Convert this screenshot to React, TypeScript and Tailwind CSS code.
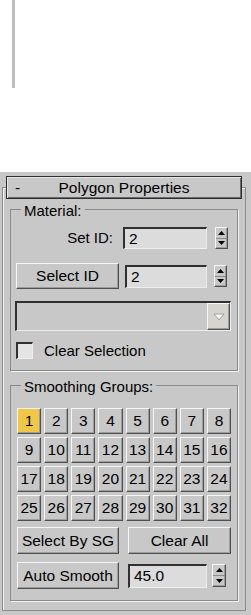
const raised =
  "border border-t-[#f6f6f6] border-l-[#f6f6f6] border-r-[#505050] border-b-[#505050] shadow-[inset_-1px_-1px_0_#9c9c9c]";
const sunken =
  "border-t-2 border-l-2 border-t-[#303030] border-l-[#303030] border-r border-b border-r-[#eeeeee] border-b-[#eeeeee]";

function Spinner({ w = 13, h = 22 }: { w?: number; h?: number }) {
  return (
    <div
      className={`flex flex-col bg-[#c8c8c8] ${raised}`}
      style={{ width: w, height: h }}
    >
      <div className="flex-1 flex items-center justify-center border-b border-[#8a8a8a]">
        <svg width="7" height="4" viewBox="0 0 7 4">
          <path d="M3.5 0 L7 4 L0 4 Z" fill="#000" />
        </svg>
      </div>
      <div className="flex-1 flex items-center justify-center">
        <svg width="7" height="4" viewBox="0 0 7 4">
          <path d="M0 0 L7 0 L3.5 4 Z" fill="#000" />
        </svg>
      </div>
    </div>
  );
}

function Btn({
  children,
  className = "",
}: {
  children: React.ReactNode;
  className?: string;
}) {
  return (
    <button
      className={`flex items-center justify-center bg-[#c8c8c8] text-[15.5px] leading-none text-black ${raised} ${className}`}
    >
      {children}
    </button>
  );
}

function Field({ value, className = "" }: { value: string; className?: string }) {
  return (
    <div
      className={`flex items-center pl-[4px] bg-[#dcdcdc] text-[15.5px] leading-none text-black ${sunken} ${className}`}
    >
      {value}
    </div>
  );
}

export default function App() {
  const groups = Array.from({ length: 32 }, (_, i) => i + 1);

  return (
    <div className="w-[251px] h-[615px] bg-white flex flex-col font-['Liberation_Sans',Arial,sans-serif] text-black overflow-hidden">
      {/* leftover of the panel above */}
      <div className="h-[172px] pl-[12px]">
        <div className="w-[3px] h-[88px] bg-[#bdbdbd]" />
      </div>

      <div className="flex-1 bg-[#c8c8c8] pt-[15px]">
        {/* rollout frame */}
        <div className="ml-[2px] w-[244px] border border-[#8a8a8a] shadow-[inset_1px_1px_0_#f2f2f2] pb-[9px]">
          {/* rollout title */}
          <div className="-mt-[12px] ml-[3px] w-[236px] h-[23px] flex items-center bg-[#c8c8c8] border border-[#2e2e2e] shadow-[inset_1px_1px_0_#e8e8e8,inset_-1px_-1px_0_#6a6a6a] text-[15.5px] leading-none">
            <span className="w-[22px] pl-[8px]">-</span>
            <span className="flex-1 text-center">Polygon Properties</span>
            <span className="w-[22px]" />
          </div>

          {/* Material */}
          <fieldset className="mx-[7px] border border-[#8a8a8a] shadow-[1px_1px_0_#f2f2f2]">
            <legend className="ml-[10px] px-[3px] pt-[3px] leading-[17px] text-[15px] bg-[#c8c8c8]">
              Material:
            </legend>
            <div className="pl-[5px] pt-[8px] pb-[11px]">
              <div className="flex items-center h-[22px]">
                <span className="w-[97px] text-right text-[15px]">Set ID:</span>
                <Field value="2" className="ml-[10px] w-[84px] h-[22px]" />
                <div className="ml-[8px]">
                  <Spinner />
                </div>
              </div>

              <div className="mt-[14px] flex items-center h-[26px]">
                <Btn className="w-[103px] h-[26px]">Select ID</Btn>
                <Field value="2" className="ml-[6px] w-[82px] h-[23px]" />
                <div className="ml-[7px]">
                  <Spinner />
                </div>
              </div>

              <div
                className={`mt-[12px] -ml-[1px] w-[216px] h-[30px] flex justify-end bg-[#c8c8c8] ${sunken}`}
              >
                <div
                  className={`w-[23px] h-full flex items-center justify-center bg-[#d6d4ce] ${raised}`}
                >
                  <svg width="12" height="8" viewBox="0 0 12 8">
                    <path
                      d="M1 1 L11 1 L6 7 Z"
                      fill="#fafafa"
                      stroke="#a0a0a0"
                      strokeWidth="1"
                    />
                  </svg>
                </div>
              </div>

              <label className="mt-[11px] flex items-center h-[17px]">
                <span
                  className={`w-[17px] h-[17px] bg-[#e4e4e4] ${sunken}`}
                />
                <span className="ml-[11px] text-[15px] leading-none">
                  Clear Selection
                </span>
              </label>
            </div>
          </fieldset>

          {/* Smoothing Groups */}
          <fieldset className="mt-[4px] mx-[7px] border border-[#8a8a8a] shadow-[1px_1px_0_#f2f2f2]">
            <legend className="ml-[10px] px-[3px] pt-[3px] leading-[17px] text-[15px] bg-[#c8c8c8]">
              Smoothing Groups:
            </legend>
            <div className="pl-[6px] pt-[13px] pb-[11px]">
              <div className="grid grid-cols-8 w-[214px] gap-[3px]">
                {groups.map((n) => (
                  <button
                    key={n}
                    className={`h-[26px] flex items-center justify-center text-[15.5px] leading-none ${raised} ${
                      n === 1 ? "bg-[#f0c846]" : "bg-[#c8c8c8]"
                    }`}
                  >
                    {n}
                  </button>
                ))}
              </div>

              <div className="mt-[6px] flex h-[27px]">
                <Btn className="w-[102px] h-[27px]">Select By SG</Btn>
                <Btn className="ml-[9px] w-[103px] h-[27px]">Clear All</Btn>
              </div>

              <div className="mt-[8px] flex items-center h-[27px]">
                <Btn className="w-[102px] h-[27px]">Auto Smooth</Btn>
                <Field value="45.0" className="ml-[9px] w-[79px] h-[24px]" />
                <div className="ml-[5px]">
                  <Spinner w={14} h={23} />
                </div>
              </div>
            </div>
          </fieldset>
        </div>
      </div>
    </div>
  );
}
